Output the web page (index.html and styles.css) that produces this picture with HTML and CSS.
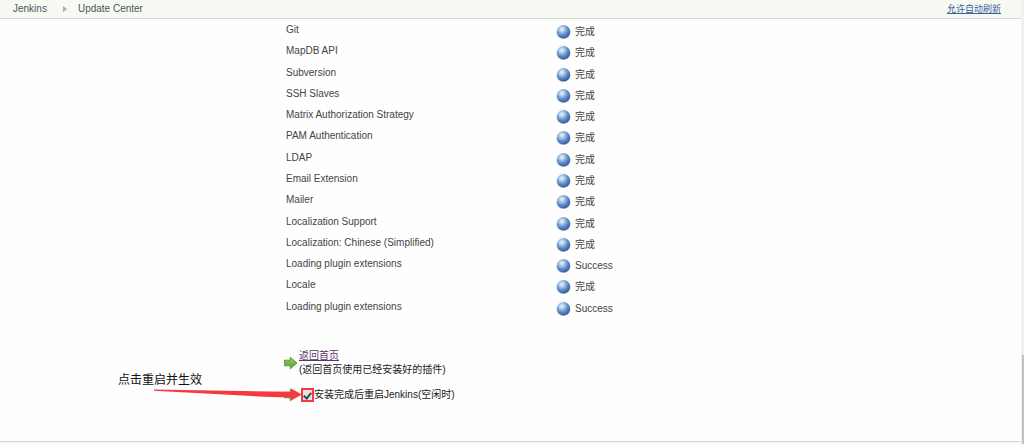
FILE: index.html
```html
<!DOCTYPE html>
<html lang="zh-CN">
<head>
    <meta charset="UTF-8" />
    <title>Update Center [Jenkins]</title>
    <link rel="stylesheet" href="styles.css">
</head>
<body>
    <!-- shared icons -->
    <svg class="defs" width="0" height="0" aria-hidden="true">
        <defs>
            <radialGradient id="ballFill" cx="0.38" cy="0.32" r="0.7">
                <stop offset="0" stop-color="#f2f7fc" />
                <stop offset="0.3" stop-color="#a9c6e4" />
                <stop offset="0.65" stop-color="#5688c2" />
                <stop offset="1" stop-color="#2f5f9d" />
            </radialGradient>
            <radialGradient id="ballShadow">
                <stop offset="0.7" stop-color="#777" stop-opacity="0.7" />
                <stop offset="1" stop-color="#777" stop-opacity="0" />
            </radialGradient>
            <linearGradient id="goFill" x1="0" y1="0" x2="0" y2="1">
                <stop offset="0" stop-color="#8fd05a" />
                <stop offset="1" stop-color="#58a52c" />
            </linearGradient>
        </defs>
        <symbol id="ball" viewBox="0 0 16 16">
            <ellipse cx="8" cy="9" rx="8" ry="7" fill="url(#ballShadow)" />
            <circle cx="8" cy="7.7" r="7.2" fill="url(#ballFill)" />
        </symbol>
        <symbol id="go" viewBox="0 0 14 14">
            <path d="M0.6 4.2H6.3V1.2L13 7L6.3 12.8V9.8H0.6Z" fill="url(#goFill)" stroke="#5a9236" stroke-width="0.9" stroke-linejoin="round" />
        </symbol>
    </svg>

    <div class="page">
        <header class="breadcrumb-bar">
            <nav class="breadcrumbs">
                <a href="#">Jenkins</a>
                <svg class="separator" viewBox="0 0 4 6" aria-hidden="true"><path d="M0 0L4 3L0 6Z" /></svg>
                <a href="#">Update Center</a>
            </nav>
            <a class="auto-refresh" href="#">允许自动刷新</a>
        </header>

        <main class="content">
            <table class="install-log">
                <tbody>
                    <tr><td>Git</td><td><span class="status"><svg><use href="#ball" /></svg>完成</span></td></tr>
                    <tr><td>MapDB API</td><td><span class="status"><svg><use href="#ball" /></svg>完成</span></td></tr>
                    <tr><td>Subversion</td><td><span class="status"><svg><use href="#ball" /></svg>完成</span></td></tr>
                    <tr><td>SSH Slaves</td><td><span class="status"><svg><use href="#ball" /></svg>完成</span></td></tr>
                    <tr><td>Matrix Authorization Strategy</td><td><span class="status"><svg><use href="#ball" /></svg>完成</span></td></tr>
                    <tr><td>PAM Authentication</td><td><span class="status"><svg><use href="#ball" /></svg>完成</span></td></tr>
                    <tr><td>LDAP</td><td><span class="status"><svg><use href="#ball" /></svg>完成</span></td></tr>
                    <tr><td>Email Extension</td><td><span class="status"><svg><use href="#ball" /></svg>完成</span></td></tr>
                    <tr><td>Mailer</td><td><span class="status"><svg><use href="#ball" /></svg>完成</span></td></tr>
                    <tr><td>Localization Support</td><td><span class="status"><svg><use href="#ball" /></svg>完成</span></td></tr>
                    <tr><td>Localization: Chinese (Simplified)</td><td><span class="status"><svg><use href="#ball" /></svg>完成</span></td></tr>
                    <tr><td>Loading plugin extensions</td><td><span class="status"><svg><use href="#ball" /></svg>Success</span></td></tr>
                    <tr><td>Locale</td><td><span class="status"><svg><use href="#ball" /></svg>完成</span></td></tr>
                    <tr><td>Loading plugin extensions</td><td><span class="status"><svg><use href="#ball" /></svg>Success</span></td></tr>
                </tbody>
            </table>

            <div class="action">
                <svg class="go"><use href="#go" /></svg>
                <div>
                    <a class="home-link" href="#">返回首页</a>
                    <div>(返回首页使用已经安装好的插件)</div>
                </div>
            </div>
            <div class="action restart">
                <svg class="go"><use href="#go" /></svg>
                <input type="checkbox" id="scheduleRestart" checked />
                <label for="scheduleRestart">安装完成后重启Jenkins(空闲时)</label>

                <!-- hint pointing at the checkbox -->
                <div class="hint">
                    <span>点击重启并生效</span>
                    <svg class="hint-arrow" viewBox="0 0 148 14" aria-hidden="true">
                        <path d="M0 1.5L137 3.8V0.5L148 6.5L137 12.5V9.5L110 8.8L0 2.8Z" />
                    </svg>
                </div>
            </div>
        </main>

        <footer class="footer"></footer>
    </div>
    <div class="scroll-track"><div class="scroll-thumb"></div></div>
</body>
</html>
```
FILE: styles.css
```css
* {
    box-sizing: border-box;
}

body {
    display: flex;
    min-height: 100vh;
    margin: 0;
    background-color: #fefefe;
    color: #444;
    font-family: "Liberation Sans", "Noto Sans CJK SC", sans-serif;
    font-size: 10px;
    line-height: 14px;
}

.defs {
    position: absolute;
}

.page {
    display: flex;
    flex: 1;
    flex-direction: column;
}

.breadcrumb-bar {
    display: flex;
    align-items: center;
    justify-content: space-between;
    height: 19px;
    padding: 0 20px 0 13px;
    background-color: #f6faf2;
    border-bottom: 1px solid #d3d7cf;
}

.breadcrumbs {
    display: flex;
    align-items: center;
}

.breadcrumbs a {
    color: #4d545d;
    text-decoration: none;
}

.separator {
    width: 4px;
    height: 6px;
    margin: 0 11px 0 16px;
    fill: #aaa;
}

.auto-refresh {
    color: #3a609a;
    font-size: 9px;
}

.content {
    flex: 1;
    padding: 1px 20px 0 284px;
}

.install-log {
    width: 400px;
    height: 298px;
    border-collapse: collapse;
    table-layout: fixed;
}

.install-log td {
    padding: 3px 2px 0;
    vertical-align: top;
}

.install-log td:first-child {
    width: 270px;
}

.status {
    display: flex;
    align-items: center;
    gap: 4px;
    height: 18px;
}

.status svg {
    width: 15px;
    height: 16px;
}

.action {
    display: flex;
    align-items: center;
    margin-top: 31px;
    color: #222;
}

.go {
    width: 14px;
    height: 14px;
    margin-right: 1px;
}

.home-link {
    color: #5c3566;
}

.restart {
    position: relative;
    margin-top: 11px;
}

.restart input {
    appearance: none;
    display: grid;
    place-items: center;
    width: 13px;
    height: 14px;
    margin: 0 0 0 2px;
    background-color: #e4e4e4;
    border: 2px solid #f5393c;
}

.restart input:checked::after {
    content: "";
    width: 3px;
    height: 6px;
    border: solid #444;
    border-width: 0 2px 2px 0;
    transform: rotate(40deg);
}

.hint {
    position: absolute;
    top: -16px;
    left: -166px;
    width: 184px;
    color: #111;
    font-size: 12px;
    line-height: 16px;
}

.hint span {
    display: block;
}

.hint-arrow {
    display: block;
    width: 148px;
    height: 14px;
    margin-left: 36px;
    fill: #f5393c;
}

.footer {
    height: 3px;
    background-color: #f6faf2;
    border-top: 1px solid #d3d7cf;
}

.scroll-track {
    display: flex;
    align-items: flex-end;
    width: 3px;
    padding-left: 1px;
    background-color: #f0f0f0;
}

.scroll-thumb {
    width: 100%;
    height: 20%;
    background-color: #c1c1c1;
}
```
